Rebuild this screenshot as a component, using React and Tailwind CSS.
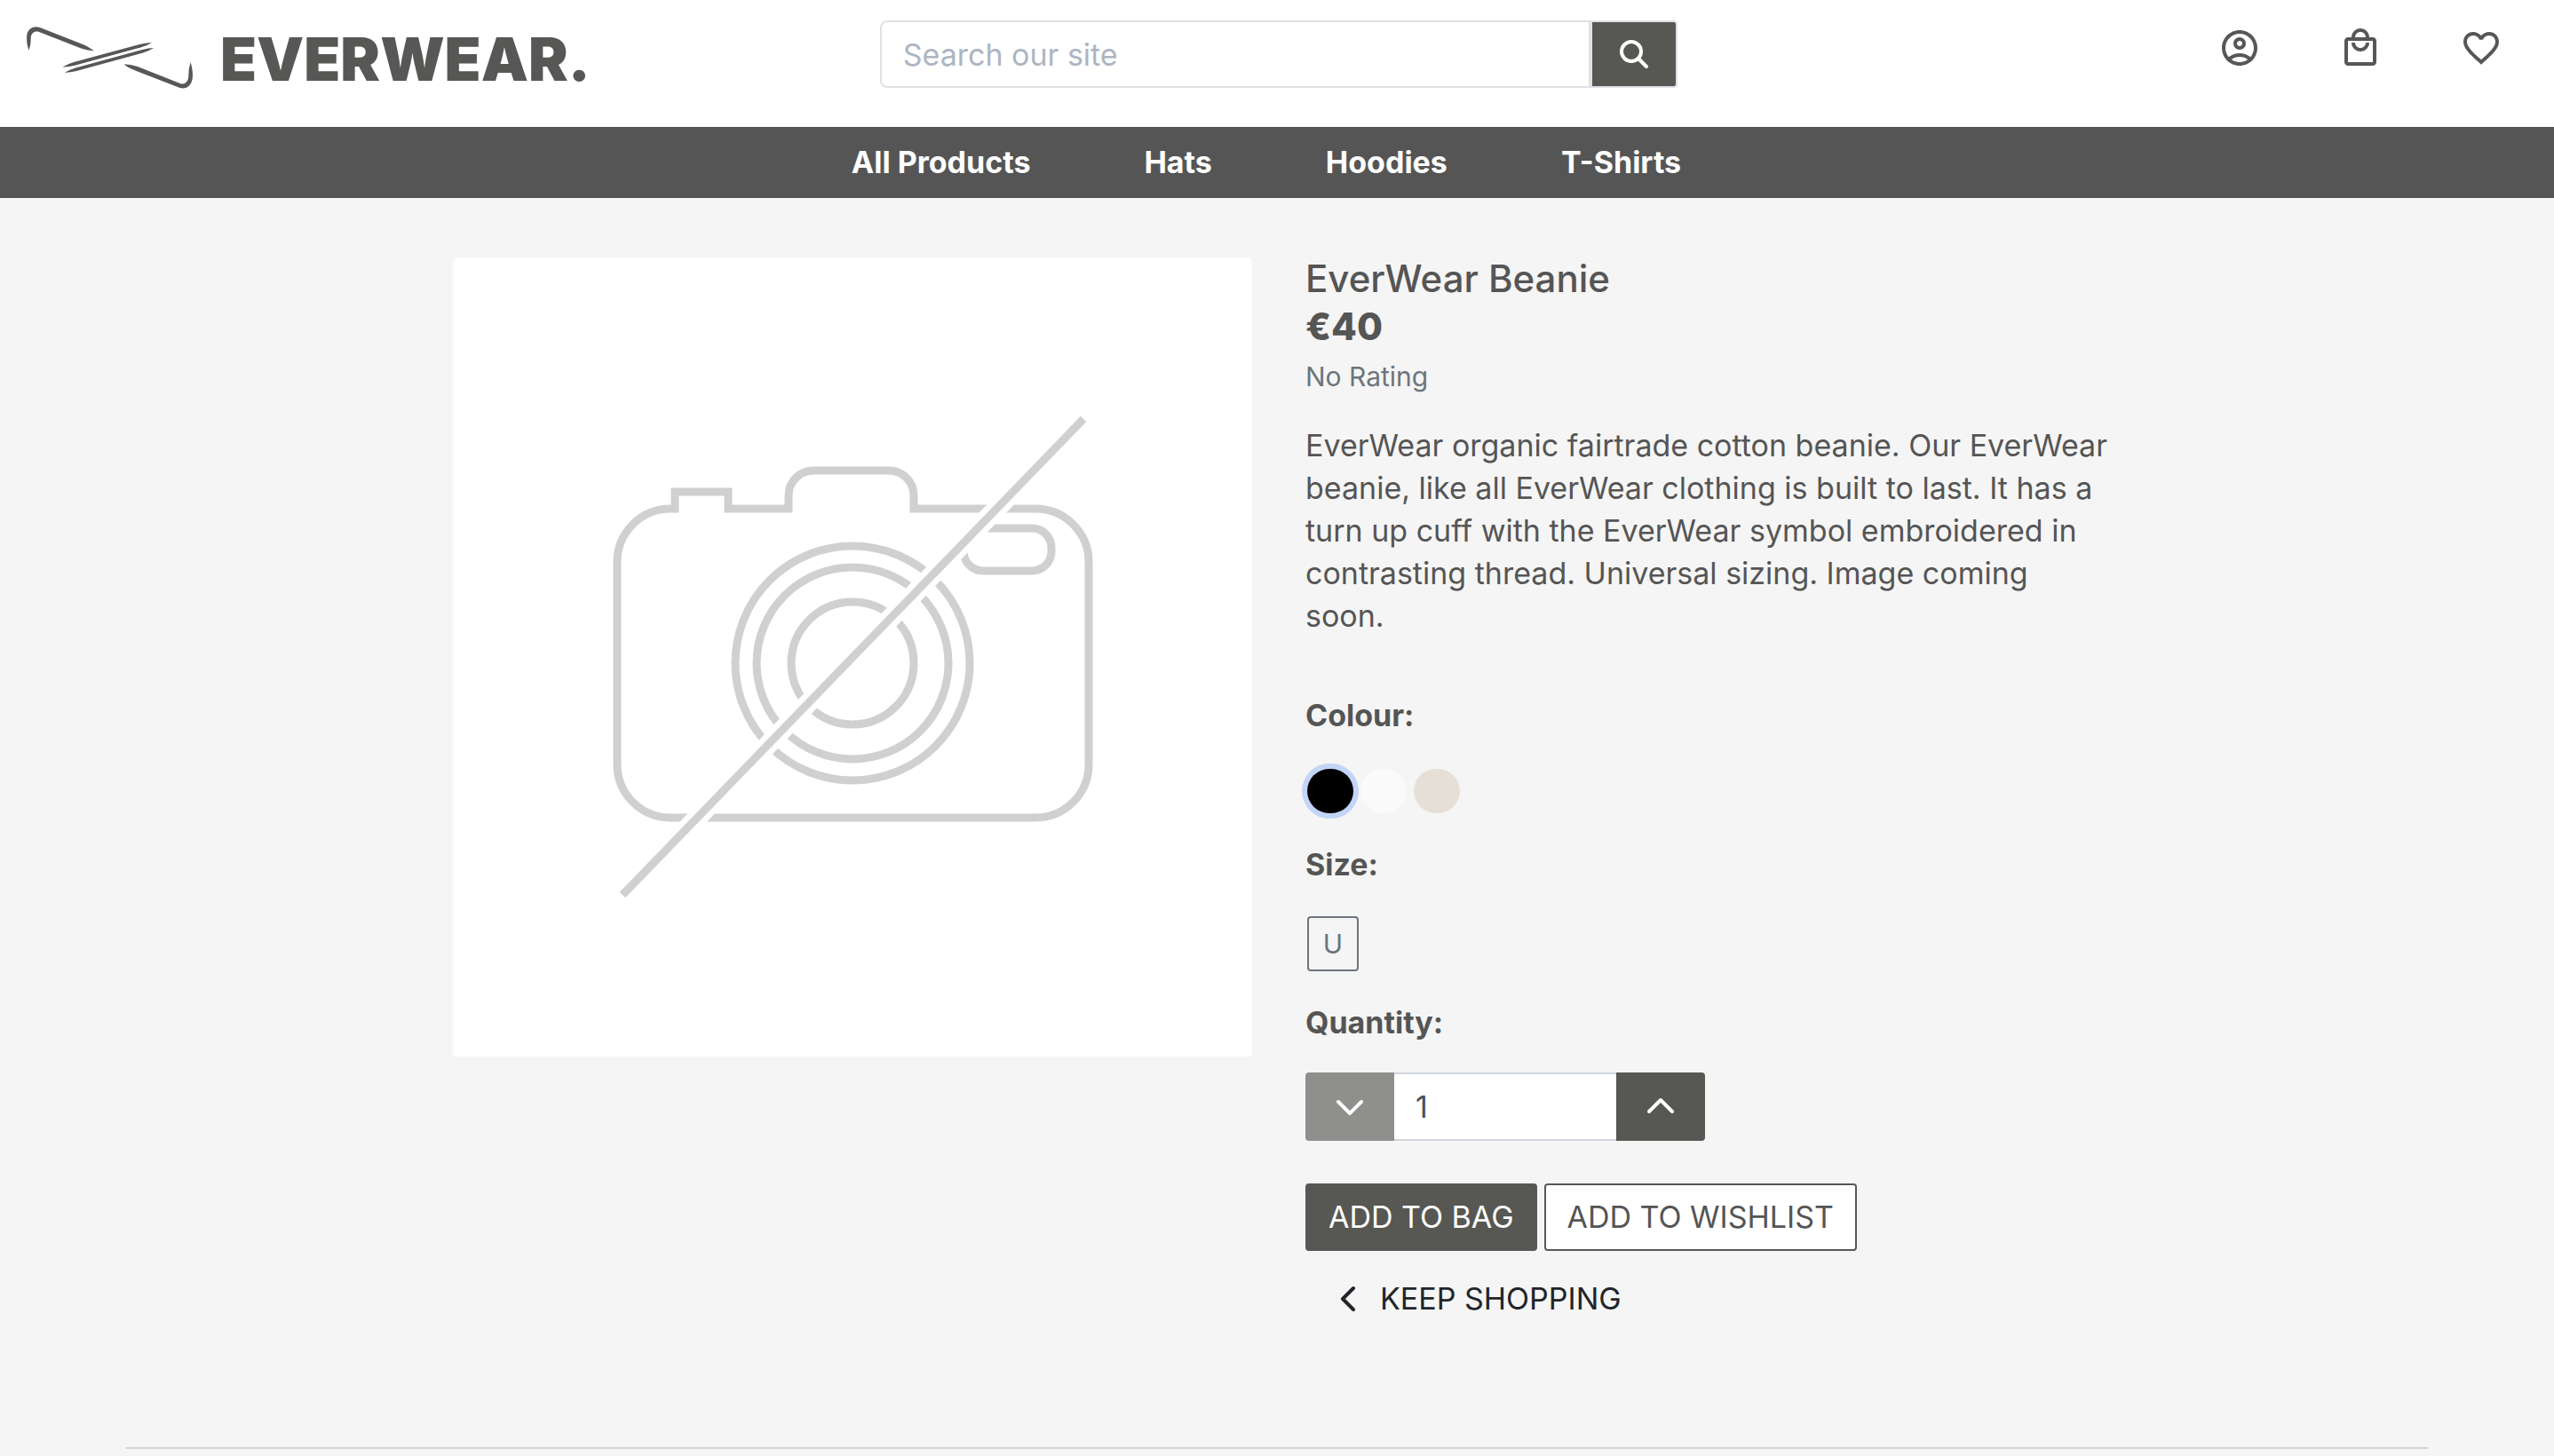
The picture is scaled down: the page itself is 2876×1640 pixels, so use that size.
import { useState } from "react";
import {
  MdOutlineAccountCircle,
  MdOutlineLocalMall,
  MdFavoriteBorder,
} from "react-icons/md";

function LogoMark() {
  return (
    <svg viewBox="28 28 192 74" className="h-[74px] w-[192px] shrink-0" fill="#575756" aria-hidden="true">
      <path d="M32.500 57C30.500 51 29.700 45 30.200 40C31.500 32 37.500 28.500 45 31L94 50.200Q102 54 106 57.300Q99 57 92 54.800L43.500 35.800C39 34.500 35.300 37 34.800 42Q35 50 32.500 57Z" />
      <path d="M214.500 70C216.500 76 217.300 82 216.800 88C215.500 97 209.500 101 202 98.800L153 79.800Q143 76 139.500 72.300Q147 72.500 155 75L203.500 94.200C208 95.500 211.700 92 212.200 87Q212 78 214.500 70Z" />
      <path d="M70.500 75.500Q76 72 83 70L158 49.700Q165 48 171 48Q166 51.300 159 53.300L84 73.800Q76 75.800 70.500 75.500Z" />
      <path d="M73 81.800Q78 78.500 85 76.500L160 55.900Q167 54.100 173 54.100Q168 57.500 161 59.500L86 80.100Q78 82 73 81.800Z" />
    </svg>
  );
}

function CameraOff() {
  return (
    <svg viewBox="0 0 900 900" className="block w-full" fill="none" stroke="#d0d0d0" strokeWidth="9" role="img" aria-label="No image available">
      <path d="M254 283H245A60 60 0 0 0 185 343V571A60 60 0 0 0 245 631H656A60 60 0 0 0 716 571V343A60 60 0 0 0 656 283H519V268A28 28 0 0 0 491 240H406A28 28 0 0 0 378 268V283H310V264H250V287" />
      <circle cx="450" cy="457" r="132" />
      <circle cx="450" cy="457" r="108" />
      <circle cx="450" cy="457" r="69" />
      <rect x="575" y="305" width="99" height="48" rx="22" />
      <path d="M710 182L191 718" stroke="#fff" strokeWidth="22" />
      <path d="M710 182L191 718" />
    </svg>
  );
}

function Chevron({ d, className }) {
  return (
    <svg viewBox="0 0 32 32" className={className} fill="none" stroke="currentColor" strokeWidth="4" strokeLinecap="round" strokeLinejoin="round" aria-hidden="true">
      <path d={d} />
    </svg>
  );
}

const links = ["All Products", "Hats", "Hoodies", "T-Shirts"];
const colours = [
  { name: "Black", style: "bg-black" },
  { name: "White", style: "bg-[#fafafa]" },
  { name: "Sand", style: "bg-[#e6dfd5]" },
];

export default function App() {
  const [colour, setColour] = useState("Black");
  const [qty, setQty] = useState(1);

  return (
    <div className="min-h-screen bg-[#f5f5f5] font-['Inter',sans-serif] text-[34px] leading-[48px] text-[#555]">
      <header className="grid grid-cols-3 bg-white pb-[41px]">
        <a href="#home" className="flex items-center gap-7 pt-7 pl-7">
          <LogoMark />
          <span className="pt-1 text-[67px] leading-[70px] font-black text-[#575756]">EVERWEAR.</span>
        </a>
        <form className="flex items-start pt-[23px] pr-7 pl-8" onSubmit={(e) => e.preventDefault()}>
          <input
            type="search"
            aria-label="Search our site"
            placeholder="Search our site"
            className="h-[76px] min-w-0 flex-1 rounded-l-lg border-2 border-[#dee2e6] bg-white px-6 placeholder:text-[#adb5c2]"
          />
          <button aria-label="Search" className="flex h-[76px] w-[98px] items-center justify-center rounded-r-sm border-2 border-[#dee2e6] bg-[#575753] text-white">
            <svg viewBox="0 0 32 32" className="size-8" fill="none" stroke="currentColor" strokeWidth="4" strokeLinecap="round" aria-hidden="true">
              <circle cx="13" cy="13" r="11" />
              <path d="M21 21L30 30" />
            </svg>
          </button>
        </form>
        <div className="flex items-start justify-end gap-[88px] pt-[30px] pr-[58px] text-5xl text-[#575756]">
          <a href="#account" aria-label="Account"><MdOutlineAccountCircle /></a>
          <a href="#bag" aria-label="Bag"><MdOutlineLocalMall /></a>
          <a href="#wishlist" aria-label="Wishlist"><MdFavoriteBorder /></a>
        </div>
      </header>

      <nav className="flex justify-center gap-32 bg-[#555] py-4 pr-6 font-bold text-white">
        {links.map((l) => (
          <a key={l} href="#products">{l}</a>
        ))}
      </nav>

      <main className="mx-auto grid max-w-[1864px] grid-cols-2 items-start gap-[60px] pt-[67px] pl-1">
        <div className="overflow-hidden rounded-t-md bg-white">
          <CameraOff />
        </div>

        <section>
          <h1 className="text-[42px] font-medium">EverWear Beanie</h1>
          <p className="mt-1.5 text-[42px] font-extrabold">€40</p>
          <p className="mt-2 text-[30px] text-[#6c757d]">No Rating</p>
          <p className="mt-[30px] -mr-1.5">
            EverWear organic fairtrade cotton beanie. Our EverWear beanie, like all EverWear clothing is built to last. It has a turn up cuff with the EverWear symbol embroidered in contrasting thread. Universal sizing. Image coming soon.
          </p>

          <h2 className="mt-16 font-bold">Colour:</h2>
          <div className="mt-9 flex gap-2 pl-0.5">
            {colours.map((c) => (
              <button
                key={c.name}
                aria-label={c.name}
                aria-pressed={colour === c.name}
                onClick={() => setColour(c.name)}
                className={`h-[50px] w-[52px] rounded-full ${c.style} ${colour === c.name ? "ring-6 ring-[#c3d5f7]" : ""}`}
              />
            ))}
          </div>

          <h2 className="mt-[34px] font-bold">Size:</h2>
          <button className="mt-[34px] ml-0.5 flex h-[62px] w-[58px] items-center justify-center rounded-sm border-2 border-[#6c757d] text-[30px] text-[#6c757d]">U</button>

          <h2 className="mt-[34px] font-bold"><label htmlFor="qty">Quantity:</label></h2>
          <div className="mt-8 flex h-[77px]">
            <button aria-label="Decrease quantity" disabled={qty <= 1} onClick={() => setQty(qty - 1)} className="flex w-[100px] items-center justify-center rounded-l-sm bg-[#8f8f8d] text-white">
              <Chevron className="size-8" d="M3 10L16 23L29 10" />
            </button>
            <input id="qty" value={qty} onChange={(e) => setQty(Number(e.target.value) || 1)} className="w-[250px] border-y-2 border-[#ced4da] bg-white px-6 text-[#495057]" />
            <button aria-label="Increase quantity" onClick={() => setQty(qty + 1)} className="flex w-[100px] items-center justify-center rounded-r-sm bg-[#575753] text-white">
              <Chevron className="size-8" d="M3 21L16 8L29 21" />
            </button>
          </div>

          <div className="mt-12 flex gap-2">
            <button className="rounded-sm border-2 border-[#575753] bg-[#575753] px-6 py-3 text-white">ADD TO BAG</button>
            <button className="rounded-sm border-2 border-[#575753] bg-white px-6 py-3">ADD TO WISHLIST</button>
          </div>
          <a href="#products" className="mt-[30px] ml-8 flex w-fit items-center gap-5 text-[#212529]">
            <Chevron className="size-8" d="M22 4L10 16L22 28" />
            KEEP SHOPPING
          </a>
        </section>
      </main>

      <hr className="mx-[142px] mt-[143px] border-t-2 border-[#d3d3d3]" />
    </div>
  );
}
